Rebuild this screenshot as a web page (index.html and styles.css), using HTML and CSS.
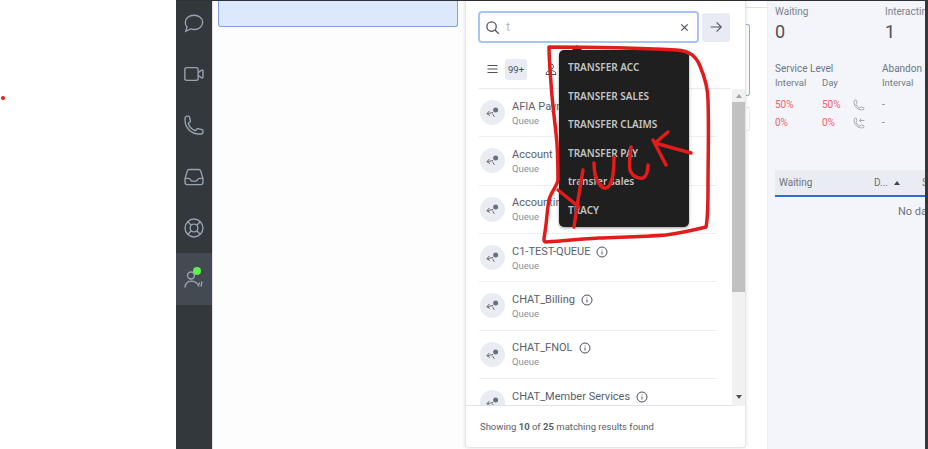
FILE: index.html
```html
<!DOCTYPE html>
<html lang="en">
<head>
    <meta charset="UTF-8">
    <meta name="viewport" content="width=device-width, initial-scale=1.0">
    <title>Transfer search</title>
    <link rel="stylesheet" href="styles.css">
</head>
<body>
    <div class="app">
        <div class="blank"></div>

        <div class="screen">
            <nav class="rail">
                <div class="rail-item">
                    <svg viewBox="0 0 24 24"><path d="M12 3.5c5.2 0 9.5 3.4 9.5 7.8s-4.3 7.8-9.5 7.8c-1.3 0-2.5-.2-3.6-.6L3 21l1.4-4.6C3 15 2.5 13.2 2.5 11.3 2.5 6.9 6.8 3.5 12 3.5Z"/></svg>
                </div>
                <div class="rail-item">
                    <svg viewBox="0 0 24 24"><rect x="2" y="5" width="14.5" height="14" rx="2"/><path d="M16.5 10.5l4-2.8c.6-.4 1.3 0 1.3.7v7.200c0 .7-.7 1.100-1.300.7l-4-2.800"/></svg>
                </div>
                <div class="rail-item">
                    <svg viewBox="0 0 24 24"><path d="M2.25 6.75c0 8.284 6.716 15 15 15h2.25a2.25 2.25 0 0 0 2.25-2.25v-1.372c0-.516-.351-.966-.852-1.091l-4.423-1.106c-.44-.11-.902.055-1.173.417l-.97 1.293c-.282.376-.769.542-1.21.38a12.035 12.035 0 0 1-7.143-7.143c-.162-.441.004-.928.38-1.21l1.293-.97c.363-.271.527-.734.417-1.173L6.963 3.102a1.125 1.125 0 0 0-1.091-.852H4.5A2.25 2.25 0 0 0 2.25 4.5v2.25Z"/></svg>
                </div>
                <div class="rail-item">
                    <svg viewBox="0 0 24 24"><path d="M2.25 13.5h3.86a2.25 2.25 0 0 1 2.012 1.244l.256.512a2.25 2.25 0 0 0 2.013 1.244h3.218a2.25 2.25 0 0 0 2.013-1.244l.256-.512a2.25 2.25 0 0 1 2.013-1.244h3.859m-19.5.338V18a2.25 2.25 0 0 0 2.25 2.25h15A2.25 2.25 0 0 0 21.75 18v-4.162c0-.224-.034-.447-.1-.661L19.24 5.338a2.25 2.25 0 0 0-2.15-1.588H6.911a2.25 2.25 0 0 0-2.15 1.588L2.35 13.177a2.25 2.25 0 0 0-.1.661Z"/></svg>
                </div>
                <div class="rail-item">
                    <svg viewBox="0 0 24 24"><circle cx="12" cy="12" r="9.8"/><circle cx="12" cy="12" r="4.2"/><path d="M5 5l4 4M15 15l4 4M19 5l-4 4M9 15l-4 4"/></svg>
                </div>
                <div class="rail-item active">
                    <svg viewBox="0 0 24 24"><circle cx="8.7" cy="8.2" r="3.8"/><path d="M2.2 21.3c0-4 2.8-7 6.5-7 4 0 7.300 2.200 8.800 5.900M20.700 14.700l-1.100 5.500M18 15.800l-.5 2.200"/></svg>
                    <span class="status-dot"></span>
                </div>
            </nav>

            <section class="workspace">
                <div class="selected-card"></div>
            </section>

            <section class="picker">
                <div class="search-row">
                    <div class="search-box">
                        <svg class="search-icon" viewBox="0 0 24 24"><circle cx="10.5" cy="10.5" r="7.5"/><path d="M16 16l6 6"/></svg>
                        <span class="search-text">t</span>
                        <svg class="clear-icon" viewBox="0 0 24 24"><path d="M5 5l14 14M19 5L5 19"/></svg>
                    </div>
                    <button class="go-btn">
                        <svg viewBox="0 0 24 24"><path d="M3 12h18M13 4l8 8-8 8"/></svg>
                    </button>
                </div>

                <div class="filter-row">
                    <svg class="menu-icon" viewBox="0 0 24 24"><path d="M2 5h20M2 12h20M2 19h20"/></svg>
                    <span class="count-badge">99+</span>
                    <svg class="person-icon" viewBox="0 0 24 24"><circle cx="12" cy="7" r="5"/><path d="M2 23c0-5 4-8 10-8s10 3 10 8z"/></svg>
                </div>

                <div class="results-wrap">
                    <div class="results">
                        <div class="result">
                            <span class="queue-icon"><svg viewBox="0 0 24 24"><path d="M3 14l10-2M7 9.5L3 14l5 3M12 14l3 5"/><circle cx="17" cy="8" r="4" class="fill"/></svg></span>
                            <div class="result-text">
                                <div class="result-name">AFIA Payments</div>
                                <div class="result-type">Queue</div>
                            </div>
                        </div>
                        <div class="result">
                            <span class="queue-icon"><svg viewBox="0 0 24 24"><path d="M3 14l10-2M7 9.5L3 14l5 3M12 14l3 5"/><circle cx="17" cy="8" r="4" class="fill"/></svg></span>
                            <div class="result-text">
                                <div class="result-name">Account Services</div>
                                <div class="result-type">Queue</div>
                            </div>
                        </div>
                        <div class="result">
                            <span class="queue-icon"><svg viewBox="0 0 24 24"><path d="M3 14l10-2M7 9.5L3 14l5 3M12 14l3 5"/><circle cx="17" cy="8" r="4" class="fill"/></svg></span>
                            <div class="result-text">
                                <div class="result-name">Accounting</div>
                                <div class="result-type">Queue</div>
                            </div>
                        </div>
                        <div class="result">
                            <span class="queue-icon"><svg viewBox="0 0 24 24"><path d="M3 14l10-2M7 9.5L3 14l5 3M12 14l3 5"/><circle cx="17" cy="8" r="4" class="fill"/></svg></span>
                            <div class="result-text">
                                <div class="result-name">C1-TEST-QUEUE <svg class="info-icon" viewBox="0 0 24 24"><circle cx="12" cy="12" r="10"/><path d="M12 11v6M12 7v1.5"/></svg></div>
                                <div class="result-type">Queue</div>
                            </div>
                        </div>
                        <div class="result">
                            <span class="queue-icon"><svg viewBox="0 0 24 24"><path d="M3 14l10-2M7 9.5L3 14l5 3M12 14l3 5"/><circle cx="17" cy="8" r="4" class="fill"/></svg></span>
                            <div class="result-text">
                                <div class="result-name">CHAT_Billing <svg class="info-icon" viewBox="0 0 24 24"><circle cx="12" cy="12" r="10"/><path d="M12 11v6M12 7v1.5"/></svg></div>
                                <div class="result-type">Queue</div>
                            </div>
                        </div>
                        <div class="result">
                            <span class="queue-icon"><svg viewBox="0 0 24 24"><path d="M3 14l10-2M7 9.5L3 14l5 3M12 14l3 5"/><circle cx="17" cy="8" r="4" class="fill"/></svg></span>
                            <div class="result-text">
                                <div class="result-name">CHAT_FNOL <svg class="info-icon" viewBox="0 0 24 24"><circle cx="12" cy="12" r="10"/><path d="M12 11v6M12 7v1.5"/></svg></div>
                                <div class="result-type">Queue</div>
                            </div>
                        </div>
                        <div class="result">
                            <span class="queue-icon"><svg viewBox="0 0 24 24"><path d="M3 14l10-2M7 9.5L3 14l5 3M12 14l3 5"/><circle cx="17" cy="8" r="4" class="fill"/></svg></span>
                            <div class="result-text">
                                <div class="result-name">CHAT_Member Services <svg class="info-icon" viewBox="0 0 24 24"><circle cx="12" cy="12" r="10"/><path d="M12 11v6M12 7v1.5"/></svg></div>
                                <div class="result-type">Queue</div>
                            </div>
                        </div>
                    </div>
                    <div class="scrollbar">
                        <span class="arrow-up"></span>
                        <span class="thumb"></span>
                        <span class="arrow-down"></span>
                    </div>
                </div>

                <div class="picker-footer">Showing <b>10</b> of <b>25</b> matching results found</div>

                <div class="tooltip">
                    <div class="tooltip-item">TRANSFER ACC</div>
                    <div class="tooltip-item">TRANSFER SALES</div>
                    <div class="tooltip-item">TRANSFER CLAIMS</div>
                    <div class="tooltip-item">TRANSFER PAY</div>
                    <div class="tooltip-item">transfer sales</div>
                    <div class="tooltip-item">TRACY</div>
                </div>
            </section>

            <div class="gutter">
                <div class="gutter-rule"></div>
                <div class="gutter-card"></div>
                <div class="gutter-card-small"></div>
            </div>

            <aside class="stats">
                <div class="stat-row">
                    <div class="stat">
                        <div class="stat-label">Waiting</div>
                        <div class="stat-value">0</div>
                    </div>
                    <div class="stat">
                        <div class="stat-label">Interacting</div>
                        <div class="stat-value">1</div>
                    </div>
                </div>

                <div class="levels">
                    <div class="level-head">Service Level</div>
                    <div class="level-head abandon">Abandon</div>
                    <div class="level-sub">Interval</div>
                    <div class="level-sub">Day</div>
                    <div></div>
                    <div class="level-sub">Interval</div>
                    <div class="level-bad">50%</div>
                    <div class="level-bad">50%</div>
                    <svg class="level-icon" viewBox="0 0 24 24"><path d="M2.25 6.75c0 8.284 6.716 15 15 15h2.25a2.25 2.25 0 0 0 2.25-2.25v-1.372c0-.516-.351-.966-.852-1.091l-4.423-1.106c-.44-.11-.902.055-1.173.417l-.97 1.293c-.282.376-.769.542-1.21.38a12.035 12.035 0 0 1-7.143-7.143c-.162-.441.004-.928.38-1.21l1.293-.97c.363-.271.527-.734.417-1.173L6.963 3.102a1.125 1.125 0 0 0-1.091-.852H4.5A2.25 2.25 0 0 0 2.25 4.5v2.25Z"/></svg>
                    <div class="level-dash">-</div>
                    <div class="level-bad">0%</div>
                    <div class="level-bad">0%</div>
                    <svg class="level-icon" viewBox="0 0 24 24"><path d="M2.25 6.75c0 8.284 6.716 15 15 15h2.25a2.25 2.25 0 0 0 2.25-2.25v-1.372c0-.516-.351-.966-.852-1.091l-4.423-1.106c-.44-.11-.902.055-1.173.417l-.97 1.293c-.282.376-.769.542-1.21.38a12.035 12.035 0 0 1-7.143-7.143c-.162-.441.004-.928.38-1.21l1.293-.97c.363-.271.527-.734.417-1.173L6.963 3.102a1.125 1.125 0 0 0-1.091-.852H4.5A2.25 2.25 0 0 0 2.25 4.5v2.25Z"/><path d="M23 7h-9M17 3l-4 4 4 4"/></svg>
                    <div class="level-dash">-</div>
                </div>

                <div class="table-head">
                    <span class="col-waiting">Waiting</span>
                    <span class="col-d">D...</span>
                    <span class="sort-arrow"></span>
                    <span class="col-s">S</span>
                </div>
                <div class="no-data">No data</div>
            </aside>

            <div class="screen-edge"></div>
        </div>
    </div>

    <!-- red marker scribbled on top of the screenshot -->
    <svg class="scribble" viewBox="0 0 928 449">
        <path d="M549 47C590 47 640 48 676 50C690 51 696 56 700 66C705 78 708 88 708 100C709 130 708 160 708 187C708 205 708 218 706 227C690 231 680 233 666 235C640 237 620 237 599 238C580 239 560 241 546 242C543 242 544 238 545 232C547 220 547 210 549 200C551 192 557 186 558 180C558 165 558 150 556 133C554 115 552 100 551 83C550 70 549 58 549 47Z"/>
        <path d="M558 190L579 207M583 170L578 200L574 227"/>
        <path d="M594 163C594 172 596 180 598 182C601 188 606 190 609 186C613 181 614 172 614 157"/>
        <path d="M631 147C630 155 629 165 630 170C632 176 638 179 643 178C647 176 648 170 648 165"/>
        <path d="M653 140L666 165M668 132L655 143L691 153"/>
    </svg>
    <span class="red-dot"></span>
</body>
</html>
```

FILE: styles.css
```css
body {
    margin: 0;
    width: 928px;
    height: 449px;
    overflow: hidden;
    position: relative;
    background: #fff;
    font-family: Roboto, "Liberation Sans", sans-serif;
}
.app {
    display: flex;
    height: 449px;
}
.blank {
    width: 176px;
    flex: none;
}
.screen {
    flex: 1;
    display: flex;
    border-top: 1px solid #2e3237;
    box-sizing: border-box;
    min-width: 0;
}

/* left rail */
.rail {
    width: 36px;
    flex: none;
    background: #33383d;
    overflow: hidden;
}
.rail-item {
    height: 51.3px;
    display: flex;
    align-items: center;
    justify-content: center;
    position: relative;
}
.rail-item:first-child {
    margin-top: -4px;
}
.rail-item svg {
    width: 22px;
    height: 22px;
    fill: none;
    stroke: #98a3b1;
    stroke-width: 1.5;
}
.rail-item.active {
    background: #434a52;
}
.status-dot {
    position: absolute;
    top: 14px;
    right: 11px;
    width: 8px;
    height: 8px;
    border-radius: 50%;
    background: #5cf04f;
}

/* middle column */
.workspace {
    width: 253px;
    flex: none;
    background: #fdfdfd;
    border-left: 1px solid #dfe3e8;
    padding: 0 5px;
    box-sizing: border-box;
}
.selected-card {
    height: 26px;
    width: 240px;
    background: #dce9fd;
    border: 1px solid #7fa1e0;
    border-top: none;
    border-radius: 0 0 3px 3px;
    box-sizing: border-box;
}

/* search popover */
.picker {
    width: 281px;
    flex: none;
    height: 447px;
    background: #fff;
    border: 1px solid #e2e5ea;
    border-top: none;
    border-radius: 0 0 4px 4px;
    box-sizing: border-box;
    position: relative;
    box-shadow: 0 0 4px rgba(0,0,0,0.12);
}
.search-row {
    display: flex;
    align-items: center;
    gap: 3px;
    padding: 10px 14px 0 12px;
}
.search-box {
    width: 221px;
    height: 32px;
    box-sizing: border-box;
    border: 2px solid #a9c4f3;
    border-radius: 4px;
    display: flex;
    align-items: center;
    padding: 0 7px 0 5px;
    gap: 6px;
}
.search-icon {
    width: 15px;
    height: 15px;
    fill: none;
    stroke: #4b5158;
    stroke-width: 2;
}
.search-text {
    flex: 1;
    font-size: 12px;
    color: #b3b7bc;
}
.clear-icon {
    width: 11px;
    height: 11px;
    fill: none;
    stroke: #4b5158;
    stroke-width: 2.5;
}
.go-btn {
    width: 28px;
    height: 29px;
    padding: 0;
    border: none;
    border-radius: 3px;
    background: #e8ebf3;
    display: flex;
    align-items: center;
    justify-content: center;
}
.go-btn svg {
    width: 14px;
    height: 14px;
    fill: none;
    stroke: #555b63;
    stroke-width: 2;
}
.filter-row {
    display: flex;
    align-items: center;
    margin: 0 14px 0 13px;
    height: 38px;
    padding-top: 7px;
    border-bottom: 1px solid #e6e9ef;
}
.menu-icon {
    width: 13px;
    height: 12px;
    margin-left: 7px;
    fill: none;
    stroke: #4b5158;
    stroke-width: 2.2;
}
.count-badge {
    margin-left: 6px;
    width: 22px;
    height: 21px;
    line-height: 21px;
    text-align: center;
    background: #e8ebf3;
    border-radius: 3px;
    font-size: 9.5px;
    color: #4b5158;
}
.person-icon {
    width: 12px;
    height: 14px;
    margin-left: 18px;
    fill: none;
    stroke: #4b5158;
    stroke-width: 2;
}
.results-wrap {
    display: flex;
    height: 317px;
}
.results {
    flex: 1;
    height: 317px;
    overflow: hidden;
    padding-left: 14px;
    border-bottom: 1px solid #dfe2e8;
    box-sizing: border-box;
    position: relative;
}
.result {
    height: 48.33px;
    width: 238px;
    margin-left: -1px;
    padding-left: 1px;
    box-sizing: border-box;
    border-bottom: 1px solid #eceef2;
    display: flex;
    align-items: center;
    gap: 7px;
}
.queue-icon {
    width: 25px;
    height: 25px;
    flex: none;
    border-radius: 50%;
    background: #e9ecf3;
    display: flex;
    align-items: center;
    justify-content: center;
}
.queue-icon svg {
    width: 15px;
    height: 15px;
    fill: none;
    stroke: #6b7178;
    stroke-width: 1.6;
}
.queue-icon .fill {
    fill: #6b7178;
    stroke: none;
}
.result-name {
    margin-top: 1px;
    font-size: 11px;
    line-height: 14px;
    color: #5a6068;
    white-space: nowrap;
    display: flex;
    align-items: center;
    gap: 6px;
}
.result-type {
    font-size: 9.5px;
    line-height: 13px;
    color: #8a9099;
}
.info-icon {
    width: 12px;
    height: 12px;
    fill: none;
    stroke: #4b5158;
    stroke-width: 2;
}
.scrollbar {
    width: 13px;
    flex: none;
    background: #f1f1f1;
    height: 317px;
    display: flex;
    flex-direction: column;
    align-items: center;
    position: relative;
}
.thumb {
    width: 100%;
    height: 190px;
    margin-top: 4px;
    background: #c1c1c1;
}
.arrow-up {
    margin-top: 5px;
    border-left: 3.5px solid transparent;
    border-right: 3.5px solid transparent;
    border-bottom: 4px solid #a3a3a3;
}
.arrow-down {
    position: absolute;
    bottom: 7px;
    border-left: 3.5px solid transparent;
    border-right: 3.5px solid transparent;
    border-top: 4px solid #505050;
}
.picker-footer {
    padding: 14px 0 0 14px;
    font-size: 9.5px;
    line-height: 13px;
    color: #5a6068;
}

/* dark tooltip over the list */
.tooltip {
    position: absolute;
    left: 93px;
    top: 49px;
    width: 130px;
    height: 177px;
    background: #1f1f1f;
    border-radius: 5px;
    box-shadow: 0 1px 3px rgba(0,0,0,0.4);
    padding: 3px 0 0 9px;
    box-sizing: border-box;
}
.tooltip::before {
    content: "";
    position: absolute;
    left: 13px;
    top: -5px;
    border-left: 5px solid transparent;
    border-right: 5px solid transparent;
    border-bottom: 5px solid #1f1f1f;
}
.tooltip-item {
    height: 28.6px;
    line-height: 28.6px;
    font-family: "Noto Sans", sans-serif;
    font-size: 10px;
    font-weight: 600;
    color: #c4c4c4;
    white-space: nowrap;
}

/* strip of the page behind the popover */
.gutter {
    width: 21px;
    flex: none;
    background: #fff;
}
.gutter-rule {
    margin-top: 6px;
    height: 1px;
    background: #dddfe3;
}
.gutter-card {
    margin-top: 16px;
    width: 4px;
    height: 72px;
    border: 1px solid #8caae4;
    border-left: none;
    border-radius: 0 3px 3px 0;
    box-sizing: border-box;
}
.gutter-card-small {
    margin-top: 11px;
    width: 4px;
    height: 24px;
    border: 1px solid #e8eaee;
    border-left: none;
    box-sizing: border-box;
}

/* stats column */
.stats {
    width: 159px;
    flex: none;
    background: #f3f5fa;
    padding-left: 7px;
    box-sizing: border-box;
    overflow: hidden;
    border-left: 1px solid #eceef2;
}
.stat-row {
    display: flex;
    padding-top: 4px;
}
.stat {
    width: 110px;
    flex: none;
}
.stat-label {
    font-size: 10px;
    line-height: 13px;
    color: #7b8289;
}
.stat-value {
    margin-top: 2px;
    font-size: 18px;
    line-height: 24px;
    color: #4b5158;
}
.levels {
    display: grid;
    grid-template-columns: 47px 31px 29px 40px;
    grid-template-rows: 15px 19.5px 18px 18px;
    align-items: center;
    margin-top: 17px;
    font-size: 10px;
    white-space: nowrap;
}
.level-head {
    grid-column: span 3;
    color: #6a7683;
}
.level-head.abandon {
    grid-column: span 1;
}
.level-sub {
    align-self: start;
    font-size: 9.5px;
    line-height: 13px;
    color: #727a85;
}
.level-bad {
    color: #f4606c;
}
.level-icon {
    width: 12px;
    height: 12px;
    fill: none;
    stroke: #8a9099;
    stroke-width: 1.5;
}
.level-dash {
    color: #7b8289;
}
.table-head {
    display: flex;
    align-items: center;
    height: 27px;
    margin-top: 38.5px;
    width: 160px;
    background: #e9ecf3;
    border-bottom: 2px solid #2f6bd0;
    box-sizing: border-box;
    font-size: 10px;
    color: #6c737b;
}
.col-waiting {
    margin-left: 4px;
    width: 95px;
}
.col-d {
    width: 20px;
}
.sort-arrow {
    width: 0;
    margin-right: 22px;
    border-left: 3px solid transparent;
    border-right: 3px solid transparent;
    border-bottom: 4px solid #3f454c;
}
.no-data {
    margin: 8px 0 0 123px;
    font-size: 11px;
    color: #6c737b;
    white-space: nowrap;
}
.screen-edge {
    position: absolute;
    right: 0;
    top: 0;
    width: 3px;
    height: 449px;
    background: #33383d;
}

/* annotation layer */
.scribble {
    position: absolute;
    left: 0;
    top: 0;
    width: 928px;
    height: 449px;
    fill: none;
    stroke: #e21b1b;
    stroke-width: 3.5;
    stroke-linejoin: round;
    stroke-linecap: round;
    pointer-events: none;
}
.red-dot {
    position: absolute;
    left: 1px;
    top: 96px;
    width: 4px;
    height: 4px;
    background: #e21b1b;
    border-radius: 50%;
}
```
